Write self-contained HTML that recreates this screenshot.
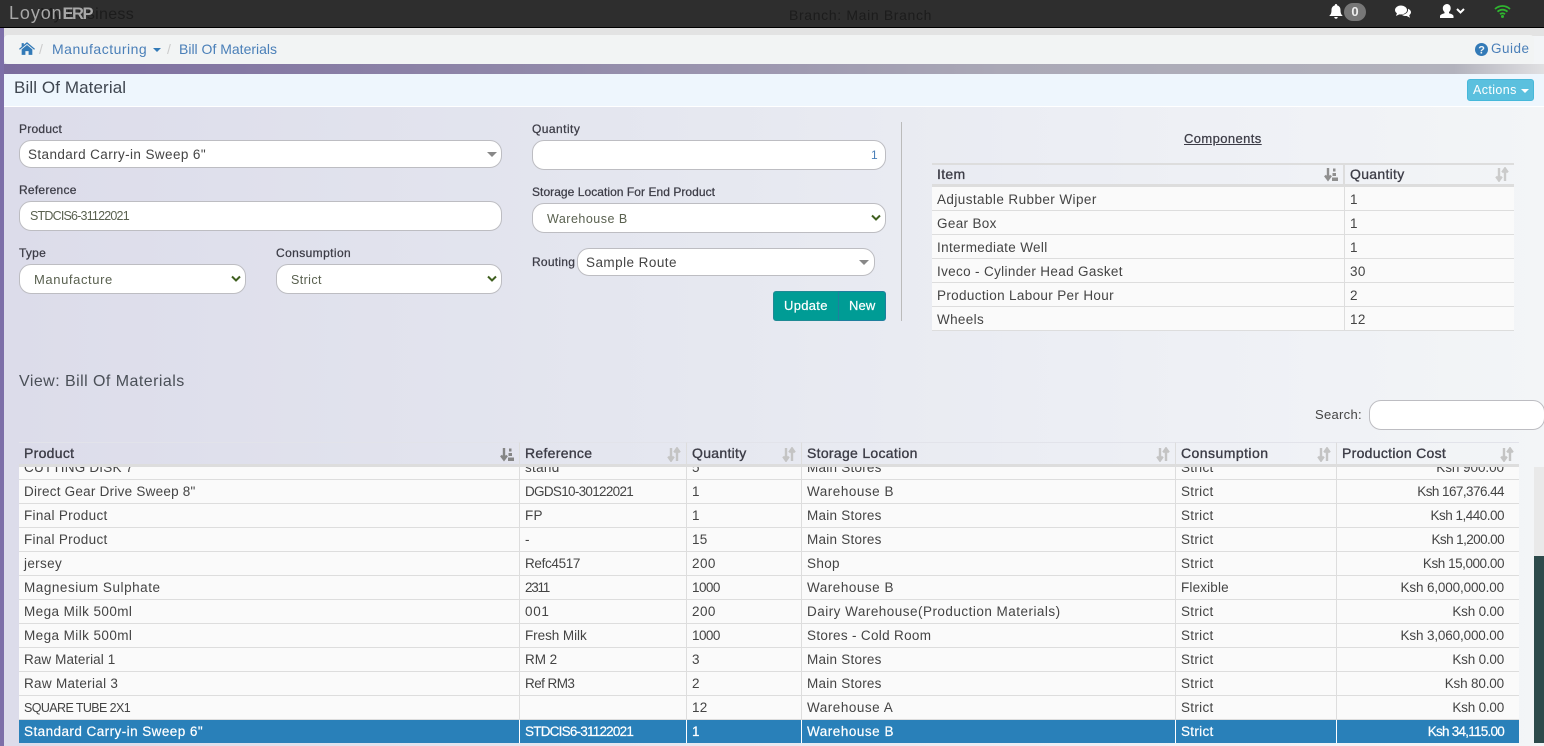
<!DOCTYPE html>
<html><head><meta charset="utf-8"><title>Bill Of Material</title>
<style>
*{box-sizing:border-box}
html,body{margin:0;padding:0;width:1544px;height:746px;overflow:hidden}
body{position:relative;background:#e8eaf1;font-family:"Liberation Sans",sans-serif;color:#444}
.a{position:absolute}
.t{position:absolute;white-space:nowrap;height:20px;line-height:20px}
.lb{font-size:12px;letter-spacing:.25px;color:#3c3c46;-webkit-text-stroke:.25px #3c3c46}
.f{position:absolute;background:#fff;border:1px solid #bdbdc2;border-radius:12px}
.v{font-size:13.5px;letter-spacing:.4px;color:#444}
.g{font-size:12.5px;letter-spacing:.35px;color:#5a6150}
table{border-collapse:separate;border-spacing:0;table-layout:fixed;font-size:13.5px;letter-spacing:.3px;color:#444}
td{height:24px;padding:0 5px;border-bottom:1px solid #ddd;border-right:1px solid #ddd;background:#fafafa;white-space:nowrap;overflow:hidden;line-height:22px}
td:last-child{border-right:0}
.c td{padding-top:2px;line-height:21px;letter-spacing:.34px}
.r{text-align:right;padding-right:15px}
tr.s td{background:#2980b9;color:#fff;border-color:#fff;border-bottom:0;-webkit-text-stroke:.2px #fff}
.h{position:absolute;top:442px;height:25px;border-top:1px solid #e2e3ea;border-bottom:3px solid #ddd;border-right:1px solid #ddd;font-size:14px;letter-spacing:.3px;color:#3c3c46;-webkit-text-stroke:.35px #3c3c46;line-height:21px;padding-left:5px}
.h2{position:absolute;top:163px;height:24px;border-top:2px solid #ddd;border-bottom:3px solid #ddd;font-size:14px;letter-spacing:.3px;color:#3c3c46;-webkit-text-stroke:.3px #3c3c46;line-height:19px;padding-left:5px}
.so{position:absolute;right:5px;top:4px}
</style></head><body>

<div class="a" style="left:0;top:28px;width:1544px;height:718px;background:linear-gradient(90deg,#dcdcea 0,#e4e6ef 600px,#eef0f5 1200px,#f3f5f7 1544px)"></div>

<!-- top bar -->
<div class="a" style="left:0;top:0;width:1544px;height:28px;background:#2e2e2e;border-bottom:1px solid #000"></div>
<div class="t" style="left:40px;top:5px;font-size:16px;color:#1c1c1c;letter-spacing:.3px">My Business</div>
<div class="t" style="left:789px;top:5px;font-size:14px;color:#1c1c1c;letter-spacing:.65px">Branch: Main Branch</div>
<div class="t" style="left:9px;top:3px;font-size:18px;color:#a8a8a8;letter-spacing:.9px">Loyon<b style="font-size:16.500px;letter-spacing:-1.500px">ERP</b></div>
<svg class="a" style="left:1329px;top:4px" width="14" height="15" viewBox="0 0 14 15"><path d="M7 0a1.2 1.2 0 0 1 1.1 1.4C10.300 2 11.500 3.700 11.500 6c0 3.500 1 4.800 2.300 6H.2C1.500 10.800 2.500 9.500 2.500 6c0-2.300 1.200-4 3.400-4.600A1.200 1.200 0 0 1 7 0zM5.300 13h3.400a1.700 1.700 0 0 1-3.400 0z" fill="#fff"/></svg>
<div class="a" style="left:1344px;top:3px;width:22px;height:18px;border-radius:9px;background:#777;color:#eee;font-size:13px;font-weight:bold;text-align:center;line-height:18px">0</div>
<svg class="a" style="left:1395px;top:5px" width="16" height="13" viewBox="0 0 16 13"><ellipse cx="6" cy="5" rx="6" ry="4.500" fill="#fff"/><path d="M2 8l-1 3 4-2z" fill="#fff"/><path d="M13 3.800c1.800.8 3 2 3 3.500 0 1.200-.8 2.200-1.800 2.900l.8 2.500-3.300-1.700c-2 .2-3.700-.3-4.700-1.300 3 0 6.500-1.700 6-5.900z" fill="#fff"/></svg>
<svg class="a" style="left:1440px;top:4px" width="26" height="14" viewBox="0 0 26 14"><path d="M7 0c2.200 0 3.700 1.800 3.700 4.200 0 1.700-.8 3-1.700 3.800v1.300c2 .7 4.500 1.300 4.500 3V14H0v-1.700c0-1.700 2.500-2.300 4.500-3V8c-.9-.8-1.700-2.100-1.700-3.800C2.800 1.800 4.800 0 7 0z" fill="#fff"/><path d="M17 5l3.500 3.500L24 5" fill="none" stroke="#fff" stroke-width="2"/></svg>
<svg class="a" style="left:1494px;top:4px" width="17" height="14" viewBox="0 0 17 14"><path d="M1 5c4.500-4 10.500-4 15 0M3.500 7.700c3-2.700 7-2.700 10 0M6 10.200c1.500-1.200 3.500-1.200 5 0" fill="none" stroke="#2fb52f" stroke-width="1.800"/><circle cx="8.500" cy="12.500" r="1.500" fill="#2fb52f"/></svg>

<!-- breadcrumb area -->
<div class="a" style="left:4px;top:28px;width:1540px;height:8px;background:#e3e3e3"></div>
<div class="a" style="left:0;top:28px;width:4px;height:718px;background:#7d6fa8"></div>
<div class="a" style="left:4px;top:64px;width:1540px;height:10px;background:linear-gradient(90deg,#7b6c9e 0,#8f86a8 500px,#aaa8b6 1000px,#b2b2bc 1450px,#e2e2e4 1544px)"></div>
<div class="a" style="left:4px;top:35px;width:1530px;height:29px;background:#f2f4f4;border-radius:4px"></div>
<svg class="a" style="left:19px;top:42px" width="16" height="13" viewBox="0 0 15 12"><path d="M7.500 0L15 6.300l-.8.9-6.700-5.500L.8 7.200 0 6.300 2.500 4.200V1h2v1.500z" fill="#337ab7"/><path d="M7.500 2.700l5 4.100V12H9V8.500H6V12H2.500V6.800z" fill="#337ab7"/></svg>
<div class="t" style="left:39px;top:39px;font-size:14px;color:#ccc">/</div>
<div class="t" style="left:52px;top:39px;font-size:14px;letter-spacing:.5px;color:#4a7fb8">Manufacturing</div>
<div class="a" style="left:153px;top:48px;border-left:4px solid transparent;border-right:4px solid transparent;border-top:4px solid #337ab7"></div>
<div class="t" style="left:167px;top:39px;font-size:14px;color:#ccc">/</div>
<div class="t" style="left:179px;top:39px;font-size:14px;letter-spacing:0;color:#4a7fb8">Bill Of Materials</div>
<svg class="a" style="left:1475px;top:43px" width="13" height="13" viewBox="0 0 12 12"><circle cx="6" cy="6" r="6" fill="#337ab7"/><text x="6" y="9.800" font-size="10" font-weight="bold" font-family="Liberation Sans" fill="#f2f4f4" text-anchor="middle">?</text></svg>
<div class="t" style="left:1491px;top:39px;font-size:13.5px;letter-spacing:.5px;color:#4a7fb8">Guide</div>

<!-- title -->
<div class="a" style="left:4px;top:74px;width:1540px;height:32px;background:#eef6fd"></div>
<div class="a" style="left:4px;top:106px;width:1540px;height:1px;background:#fff"></div>
<div class="t" style="left:14px;top:78px;font-size:17px;letter-spacing:.1px;color:#3f4650">Bill Of Material</div>
<div class="a" style="left:1467px;top:79px;width:67px;height:22px;background:#5bc0de;border:1px solid #46b8da;border-radius:3px"></div>
<div class="t" style="left:1473px;top:80px;font-size:12.5px;letter-spacing:.4px;color:#fff">Actions</div>
<div class="a" style="left:1521px;top:89px;border-left:4px solid transparent;border-right:4px solid transparent;border-top:4px solid #fff"></div>

<!-- form left -->
<div class="t lb" style="left:19px;top:119px">Product</div>
<div class="f" style="left:19px;top:140px;width:483px;height:28px"></div>
<div class="t v" style="left:28px;top:145px">Standard Carry-in Sweep 6"</div>
<div class="a" style="left:487px;top:152px;border-left:5px solid transparent;border-right:5px solid transparent;border-top:5px solid #888"></div>
<div class="t lb" style="left:19px;top:180px">Reference</div>
<div class="f" style="left:19px;top:201px;width:483px;height:30px"></div>
<div class="t g" style="left:30px;top:206px;letter-spacing:-.8px">STDCIS6-31122021</div>
<div class="t lb" style="left:19px;top:243px">Type</div>
<div class="f" style="left:19px;top:264px;width:227px;height:30px"></div>
<div class="t g" style="left:34px;top:270px;letter-spacing:.6px;font-size:13px">Manufacture</div>
<svg class="a" style="left:231px;top:275px" width="10" height="8" viewBox="0 0 10 8"><path d="M1 1.500l4 4 4-4" fill="none" stroke="#3f5f1f" stroke-width="2"/></svg>
<div class="t lb" style="left:276px;top:243px;letter-spacing:.4px">Consumption</div>
<div class="f" style="left:276px;top:264px;width:226px;height:30px"></div>
<div class="t g" style="left:291px;top:270px;letter-spacing:.4px">Strict</div>
<svg class="a" style="left:487px;top:275px" width="10" height="8" viewBox="0 0 10 8"><path d="M1 1.500l4 4 4-4" fill="none" stroke="#3f5f1f" stroke-width="2"/></svg>

<!-- form mid -->
<div class="t lb" style="left:532px;top:119px;letter-spacing:.45px">Quantity</div>
<div class="f" style="left:532px;top:140px;width:354px;height:30px"></div>
<div class="t" style="left:871px;top:145px;font-size:12px;color:#4a7fb8">1</div>
<div class="t lb" style="left:532px;top:182px;letter-spacing:.05px">Storage Location For End Product</div>
<div class="f" style="left:532px;top:203px;width:354px;height:30px"></div>
<div class="t g" style="left:547px;top:209px;letter-spacing:.5px">Warehouse B</div>
<svg class="a" style="left:871px;top:214px" width="10" height="8" viewBox="0 0 10 8"><path d="M1 1.500l4 4 4-4" fill="none" stroke="#3f5f1f" stroke-width="2"/></svg>
<div class="t lb" style="left:532px;top:252px">Routing</div>
<div class="f" style="left:577px;top:248px;width:298px;height:28px"></div>
<div class="t v" style="left:586px;top:253px;letter-spacing:.45px">Sample Route</div>
<div class="a" style="left:859px;top:260px;border-left:5px solid transparent;border-right:5px solid transparent;border-top:5px solid #888"></div>
<div class="a" style="left:773px;top:291px;width:66px;height:30px;background:#009c95;border:1px solid #1f8a94;border-radius:3px 0 0 3px"></div>
<div class="a" style="left:838px;top:291px;width:48px;height:30px;background:#009c95;border:1px solid #1f7f9e;border-radius:0 3px 3px 0"></div>
<div class="t" style="left:784px;top:296px;font-size:13px;letter-spacing:.3px;color:#fff;-webkit-text-stroke:.2px #fff">Update</div>
<div class="t" style="left:849px;top:296px;font-size:13px;letter-spacing:.15px;color:#fff;-webkit-text-stroke:.2px #fff">New</div>
<div class="a" style="left:901px;top:122px;width:1px;height:199px;background:#bbb"></div>

<!-- components -->
<div class="t" style="left:1184px;top:129px;font-size:13px;letter-spacing:.4px;color:#3c3c46;-webkit-text-stroke:.25px #3c3c46;text-decoration:underline">Components</div>
<div class="h2" style="left:932px;width:413px;border-right:2px solid #ddd">Item<svg class="so" style="top:2px" width="14" height="15" viewBox="0 0 14 15"><path d="M4 1v11M1 8.500l3 4 3-4" fill="none" stroke="#8f8f8f" stroke-width="2.400"/><path d="M9 1.500h2.500v3H9zM8.500 6H12v3H8.500zM8 10.500h6V14H8z" fill="#8f8f8f"/></svg></div>
<div class="h2" style="left:1345px;width:169px">Quantity<svg class="so" style="top:2px" width="14" height="15" viewBox="0 0 14 15"><path d="M4 1v12M1.200 9.500L4 13.500l2.800-4M10 14V2M7.200 5.500L10 1.500l2.800 4" fill="none" stroke="#cbcbcb" stroke-width="2.400"/></svg></div>
<table class="a c" style="left:932px;top:187px;width:582px"><colgroup><col style="width:413px"><col></colgroup>
<tr><td style="letter-spacing:.42px">Adjustable Rubber Wiper</td><td>1</td></tr>
<tr><td>Gear Box</td><td>1</td></tr>
<tr><td>Intermediate Well</td><td>1</td></tr>
<tr><td>Iveco - Cylinder Head Gasket</td><td>30</td></tr>
<tr><td>Production Labour Per Hour</td><td>2</td></tr>
<tr><td>Wheels</td><td>12</td></tr>
</table>

<!-- view -->
<div class="t" style="left:19px;top:372px;font-size:16px;letter-spacing:.45px;color:#4a4f57">View: Bill Of Materials</div>
<div class="t" style="left:1315px;top:405px;font-size:13px;letter-spacing:.3px;color:#444">Search:</div>
<div class="f" style="left:1369px;top:400px;width:176px;height:30px"></div>

<!-- table head -->
<div class="h" style="left:19px;width:501px">Product<svg class="so" width="14" height="15" viewBox="0 0 14 15"><path d="M4 1v11M1 8.500l3 4 3-4" fill="none" stroke="#858585" stroke-width="2.400"/><path d="M9 1.500h2.500v3H9zM8.500 6H12v3H8.500zM8 10.500h6V14H8z" fill="#858585"/></svg></div>
<div class="h" style="left:520px;width:167px">Reference<svg class="so" width="14" height="15" viewBox="0 0 14 15"><path d="M4 1v12M1.200 9.500L4 13.500l2.800-4M10 14V2M7.200 5.500L10 1.500l2.800 4" fill="none" stroke="#c4c4c4" stroke-width="2.400"/></svg></div>
<div class="h" style="left:687px;width:115px">Quantity<svg class="so" width="14" height="15" viewBox="0 0 14 15"><path d="M4 1v12M1.200 9.500L4 13.500l2.800-4M10 14V2M7.200 5.500L10 1.500l2.800 4" fill="none" stroke="#c4c4c4" stroke-width="2.400"/></svg></div>
<div class="h" style="left:802px;width:374px">Storage Location<svg class="so" width="14" height="15" viewBox="0 0 14 15"><path d="M4 1v12M1.200 9.500L4 13.500l2.800-4M10 14V2M7.200 5.500L10 1.500l2.800 4" fill="none" stroke="#c4c4c4" stroke-width="2.400"/></svg></div>
<div class="h" style="left:1176px;width:161px;letter-spacing:.45px">Consumption<svg class="so" width="14" height="15" viewBox="0 0 14 15"><path d="M4 1v12M1.200 9.500L4 13.500l2.800-4M10 14V2M7.200 5.500L10 1.500l2.800 4" fill="none" stroke="#c4c4c4" stroke-width="2.400"/></svg></div>
<div class="h" style="left:1337px;width:182px;border-right:0">Production Cost<svg class="so" width="14" height="15" viewBox="0 0 14 15"><path d="M4 1v12M1.200 9.500L4 13.500l2.800-4M10 14V2M7.200 5.500L10 1.500l2.800 4" fill="none" stroke="#c4c4c4" stroke-width="2.400"/></svg></div>

<!-- table body -->
<div class="a" style="left:19px;top:467px;width:1500px;height:276px;overflow:hidden">
<table style="margin-top:-11px;width:1500px"><colgroup><col style="width:501px"><col style="width:167px"><col style="width:115px"><col style="width:374px"><col style="width:161px"><col></colgroup>
<tr><td style="letter-spacing:.2px">CUTTING DISK 7</td><td>stand</td><td style="letter-spacing:.2px">5</td><td style="letter-spacing:.24px">Main Stores</td><td>Strict</td><td class="r" style="letter-spacing:-.06px">Ksh 900.00</td></tr>
<tr><td style="letter-spacing:.24px">Direct Gear Drive Sweep 8"</td><td style="letter-spacing:-.7px">DGDS10-30122021</td><td>1</td><td style="letter-spacing:.52px">Warehouse B</td><td>Strict</td><td class="r" style="letter-spacing:-.56px">Ksh 167,376.44</td></tr>
<tr><td style="letter-spacing:.31px">Final Product</td><td>FP</td><td>1</td><td style="letter-spacing:.24px">Main Stores</td><td>Strict</td><td class="r" style="letter-spacing:-.51px">Ksh 1,440.00</td></tr>
<tr><td style="letter-spacing:.31px">Final Product</td><td>-</td><td>15</td><td style="letter-spacing:.24px">Main Stores</td><td>Strict</td><td class="r" style="letter-spacing:-.59px">Ksh 1,200.00</td></tr>
<tr><td style="letter-spacing:.34px">jersey</td><td style="letter-spacing:-.34px">Refc4517</td><td style="letter-spacing:.44px">200</td><td style="letter-spacing:.34px">Shop</td><td>Strict</td><td class="r" style="letter-spacing:-.46px">Ksh 15,000.00</td></tr>
<tr><td style="letter-spacing:.54px">Magnesium Sulphate</td><td style="letter-spacing:-1.26px">2311</td><td style="letter-spacing:-.56px">1000</td><td style="letter-spacing:.52px">Warehouse B</td><td style="letter-spacing:.16px">Flexible</td><td class="r" style="letter-spacing:-.15px">Ksh 6,000,000.00</td></tr>
<tr><td style="letter-spacing:.42px">Mega Milk 500ml</td><td style="letter-spacing:.7px">001</td><td style="letter-spacing:.44px">200</td><td style="letter-spacing:.48px">Dairy Warehouse(Production Materials)</td><td>Strict</td><td class="r" style="letter-spacing:-.21px">Ksh 0.00</td></tr>
<tr><td style="letter-spacing:.42px">Mega Milk 500ml</td><td style="letter-spacing:-.06px">Fresh Milk</td><td style="letter-spacing:-.56px">1000</td><td style="letter-spacing:.32px">Stores - Cold Room</td><td>Strict</td><td class="r" style="letter-spacing:-.15px">Ksh 3,060,000.00</td></tr>
<tr><td style="letter-spacing:.09px">Raw Material 1</td><td style="letter-spacing:-.06px">RM 2</td><td>3</td><td style="letter-spacing:.24px">Main Stores</td><td>Strict</td><td class="r" style="letter-spacing:-.21px">Ksh 0.00</td></tr>
<tr><td style="letter-spacing:.3px">Raw Material 3</td><td style="letter-spacing:-.56px">Ref RM3</td><td>2</td><td style="letter-spacing:.24px">Main Stores</td><td>Strict</td><td class="r" style="letter-spacing:-.17px">Ksh 80.00</td></tr>
<tr><td style="font-size:12.5px;letter-spacing:-.6px">SQUARE TUBE 2X1</td><td></td><td>12</td><td style="letter-spacing:.52px">Warehouse A</td><td>Strict</td><td class="r" style="letter-spacing:-.21px">Ksh 0.00</td></tr>
<tr class="s"><td style="letter-spacing:.44px">Standard Carry-in Sweep 6"</td><td style="letter-spacing:-.78px">STDCIS6-31122021</td><td>1</td><td style="letter-spacing:.52px">Warehouse B</td><td>Strict</td><td class="r" style="letter-spacing:-.76px">Ksh 34,115.00</td></tr>
</table></div>

<!-- scrollbar -->
<div class="a" style="left:1534px;top:467px;width:10px;height:89px;background:#e9e9e9"></div>
<div class="a" style="left:1534px;top:556px;width:10px;height:187px;background:#2d4a4b"></div>
</body></html>
